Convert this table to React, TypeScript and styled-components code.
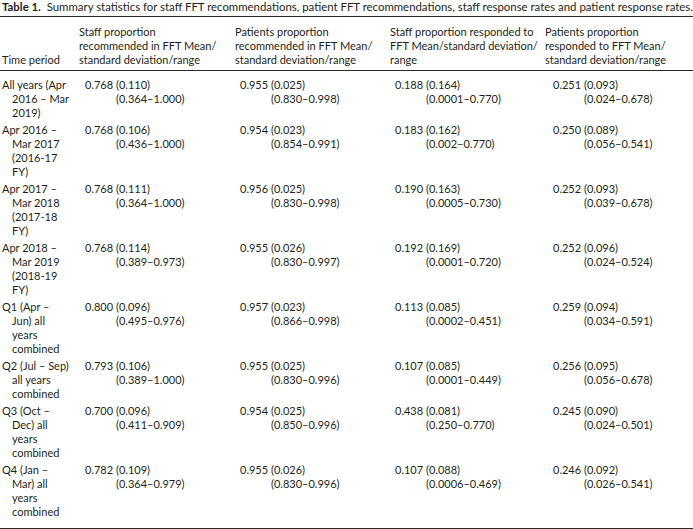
import styled, { createGlobalStyle } from "styled-components";

const GlobalStyle = createGlobalStyle`
  html, body {
    margin: 0;
    padding: 0;
    background: #ffffff;
  }
  body {
    font-family: Lato, "Liberation Sans", sans-serif;
    color: #231f20;
  }
`;

type Stat = { mean: string; sd: string; range: string };
type Row = { period: string[]; cells: Stat[] };

const rows: Row[] = [
  {
    period: ["All years (Apr", "2016 – Mar", "2019)"],
    cells: [
      { mean: "0.768", sd: "(0.110)", range: "(0.364–1.000)" },
      { mean: "0.955", sd: "(0.025)", range: "(0.830–0.998)" },
      { mean: "0.188", sd: "(0.164)", range: "(0.0001–0.770)" },
      { mean: "0.251", sd: "(0.093)", range: "(0.024–0.678)" },
    ],
  },
  {
    period: ["Apr 2016 –", "Mar 2017", "(2016-17", "FY)"],
    cells: [
      { mean: "0.768", sd: "(0.106)", range: "(0.436–1.000)" },
      { mean: "0.954", sd: "(0.023)", range: "(0.854–0.991)" },
      { mean: "0.183", sd: "(0.162)", range: "(0.002–0.770)" },
      { mean: "0.250", sd: "(0.089)", range: "(0.056–0.541)" },
    ],
  },
  {
    period: ["Apr 2017 –", "Mar 2018", "(2017-18", "FY)"],
    cells: [
      { mean: "0.768", sd: "(0.111)", range: "(0.364–1.000)" },
      { mean: "0.956", sd: "(0.025)", range: "(0.830–0.998)" },
      { mean: "0.190", sd: "(0.163)", range: "(0.0005–0.730)" },
      { mean: "0.252", sd: "(0.093)", range: "(0.039–0.678)" },
    ],
  },
  {
    period: ["Apr 2018 –", "Mar 2019", "(2018-19", "FY)"],
    cells: [
      { mean: "0.768", sd: "(0.114)", range: "(0.389–0.973)" },
      { mean: "0.955", sd: "(0.026)", range: "(0.830–0.997)" },
      { mean: "0.192", sd: "(0.169)", range: "(0.0001–0.720)" },
      { mean: "0.252", sd: "(0.096)", range: "(0.024–0.524)" },
    ],
  },
  {
    period: ["Q1 (Apr –", "Jun) all", "years", "combined"],
    cells: [
      { mean: "0.800", sd: "(0.096)", range: "(0.495–0.976)" },
      { mean: "0.957", sd: "(0.023)", range: "(0.866–0.998)" },
      { mean: "0.113", sd: "(0.085)", range: "(0.0002–0.451)" },
      { mean: "0.259", sd: "(0.094)", range: "(0.034–0.591)" },
    ],
  },
  {
    period: ["Q2 (Jul – Sep)", "all years", "combined"],
    cells: [
      { mean: "0.793", sd: "(0.106)", range: "(0.389–1.000)" },
      { mean: "0.955", sd: "(0.025)", range: "(0.830–0.996)" },
      { mean: "0.107", sd: "(0.085)", range: "(0.0001–0.449)" },
      { mean: "0.256", sd: "(0.095)", range: "(0.056–0.678)" },
    ],
  },
  {
    period: ["Q3 (Oct –", "Dec) all", "years", "combined"],
    cells: [
      { mean: "0.700", sd: "(0.096)", range: "(0.411–0.909)" },
      { mean: "0.954", sd: "(0.025)", range: "(0.850–0.996)" },
      { mean: "0.438", sd: "(0.081)", range: "(0.250–0.770)" },
      { mean: "0.245", sd: "(0.090)", range: "(0.024–0.501)" },
    ],
  },
  {
    period: ["Q4 (Jan –", "Mar) all", "years", "combined"],
    cells: [
      { mean: "0.782", sd: "(0.109)", range: "(0.364–0.979)" },
      { mean: "0.955", sd: "(0.026)", range: "(0.830–0.996)" },
      { mean: "0.107", sd: "(0.088)", range: "(0.0006–0.469)" },
      { mean: "0.246", sd: "(0.092)", range: "(0.026–0.541)" },
    ],
  },
];

const headers: string[][] = [
  ["Staff proportion", "recommended in FFT Mean/", "standard deviation/range"],
  ["Patients proportion", "recommended in FFT Mean/", "standard deviation/range"],
  ["Staff proportion responded to", "FFT Mean/standard deviation/", "range"],
  ["Patients proportion", "responded to FFT Mean/", "standard deviation/range"],
];

// data columns start a few px right of their heading
const numberOffsets = [6, 5, 5, 8];

const App = () => {
  return (
    <Page>
      <GlobalStyle />
      <Caption>
        <CaptionLabel>Table 1.</CaptionLabel>
        {"  "}Summary statistics for staff FFT recommendations, patient FFT
        recommendations, staff response rates and patient response rates.
      </Caption>
      <StatsTable>
        <colgroup>
          <col style={{ width: 77 }} />
          <col style={{ width: 156 }} />
          <col style={{ width: 155 }} />
          <col style={{ width: 155 }} />
          <col />
        </colgroup>
        <thead>
          <tr>
            <HeadCell>Time period</HeadCell>
            {headers.map((lines, i) => (
              <HeadCell key={i}>
                {lines.map((l, j) => (
                  <HeadLine key={j}>{l}</HeadLine>
                ))}
              </HeadCell>
            ))}
          </tr>
        </thead>
        <tbody>
          {rows.map((row, i) => (
            <BodyRow key={i}>
              <PeriodCell>
                {row.period.map((l, j) => (
                  <PeriodLine key={j} $cont={j > 0}>
                    {l}
                  </PeriodLine>
                ))}
              </PeriodCell>
              {row.cells.map((c, j) => (
                <StatCell key={j} $offset={numberOffsets[j]}>
                  <StatWrap>
                    <Mean>{c.mean}</Mean>
                    <Spread>
                      <span>{c.sd}</span>
                      <span>{c.range}</span>
                    </Spread>
                  </StatWrap>
                </StatCell>
              ))}
            </BodyRow>
          ))}
        </tbody>
      </StatsTable>
    </Page>
  );
};

export default App;

const Page = styled.div`
  width: 693px;
  height: 529px;
  overflow: hidden;
  font-size: 11px;
  line-height: 14px;
`;

const Caption = styled.div`
  padding: 0 0 2px 2px;
  white-space: pre-wrap;
  font-size: 11.4px;
  height: 14px;
  overflow: hidden;
`;

const CaptionLabel = styled.b`
  font-weight: 700;
`;

const StatsTable = styled.table`
  width: 693px;
  table-layout: fixed;
  border-collapse: collapse;
  border-top: 1px solid #2b2b2b;
  border-bottom: 1px solid #2b2b2b;
`;

const HeadCell = styled.th`
  text-align: left;
  font-weight: 400;
  vertical-align: bottom;
  padding: 8px 0 3px 2px;
  border-bottom: 1px solid #2b2b2b;
  white-space: nowrap;
`;

const HeadLine = styled.div``;

const BodyRow = styled.tr`
  td {
    padding-top: 1.5px;
    padding-bottom: 1.5px;
  }
  &:first-child td {
    padding-top: 7px;
  }
  &:last-child td {
    padding-bottom: 9px;
  }
`;

const PeriodCell = styled.td`
  vertical-align: top;
  padding-left: 2px;
  white-space: nowrap;
`;

const PeriodLine = styled.div<{ $cont: boolean }>`
  padding-left: ${(p) => (p.$cont ? "10px" : "0")};
`;

const StatCell = styled.td<{ $offset: number }>`
  vertical-align: top;
  padding-left: ${(p) => p.$offset + 2}px;
  white-space: nowrap;
`;

const StatWrap = styled.div`
  display: flex;
  align-items: flex-start;
`;

const Mean = styled.span`
  width: 31px;
  flex: none;
`;

const Spread = styled.span`
  display: flex;
  flex-direction: column;
`;
